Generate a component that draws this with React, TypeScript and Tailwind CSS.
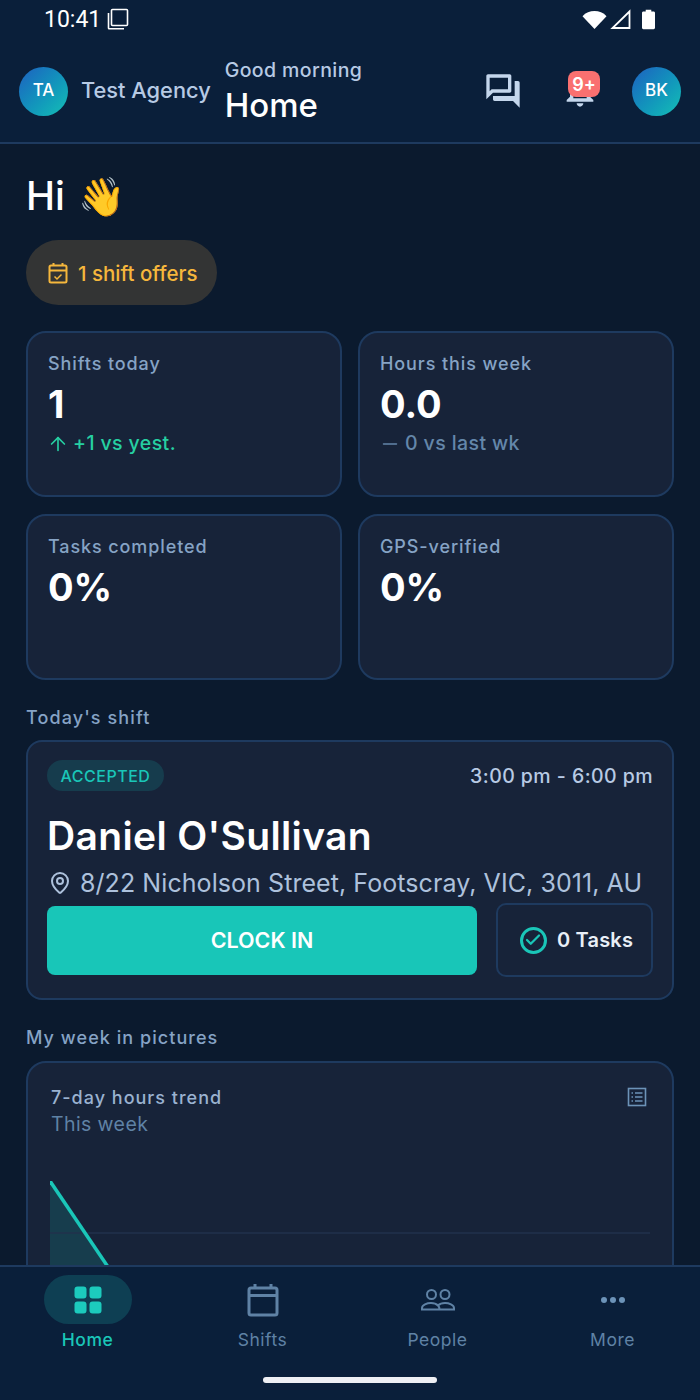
import { ReactNode } from "react";
import { ArrowUp, Check, MapPin, Minus } from "lucide-react";

const StatCard = ({ label, value, delta }: { label: string; value: string; delta?: ReactNode }) => (
    <div className="h-[166px] rounded-[20px] border-2 border-[#1e3a5f] bg-[#172339] px-[20px] pt-[19px]">
        <p className="text-[18px] leading-[24px] font-medium tracking-[0.9px] text-[#86a3c5]">{label}</p>
        <p className="mt-[3px] text-[38px] leading-[50px] font-bold text-white">{value}</p>
        {delta}
    </div>
);

const NavItem = ({ label, active, children }: { label: string; active?: boolean; children: ReactNode }) => (
    <div className="flex flex-col items-center">
        <div className={`flex h-[49px] w-[88px] items-center justify-center rounded-full ${active ? "bg-[#0e3f53]" : ""}`}>
            {children}
        </div>
        <span className={`mt-[4px] text-[17.500px] leading-[24px] tracking-[0.5px] ${active ? "font-medium text-[#1ac6b8]" : "text-[#5f82a5]"}`}>
            {label}
        </span>
    </div>
);

export default function App() {
    return (
        <div className="flex h-[1400px] w-[700px] flex-col overflow-hidden bg-[#0b1a2e] font-['Inter',sans-serif]">
            {/* header + status bar */}
            <header className="h-[144px] shrink-0 border-b-2 border-[#1e3a5f] bg-[#0a1f3a]">
                <div className="flex h-[38px] items-center justify-between pr-[45px] pl-[44px]">
                    <div className="flex items-center gap-[6px]">
                        <span className="mt-[2px] font-['Roboto',sans-serif] text-[23px] text-white">10:41</span>
                        <svg width="22" height="22" viewBox="0 0 22 22" fill="none" stroke="white" strokeWidth="1.600">
                            <rect x="4.500" y="1.500" width="16" height="16" rx="1" />
                            <path d="M1.500 5v15a.8.8 0 0 0 .8.8h14.700" />
                        </svg>
                    </div>
                    <div className="flex items-center">
                        <svg width="25" height="21" viewBox="0 0 26 20">
                            <path d="M0.500 6.500C7-0.500 19-0.500 25.500 6.500L13 20z" fill="white" />
                        </svg>
                        <svg width="21" height="20" viewBox="0 0 21 20" fill="none" stroke="white" strokeWidth="1.800" className="ml-[3px]">
                            <path d="M19.500 2.500V19H2.500z" />
                        </svg>
                        <svg width="13" height="21" viewBox="0 0 14 21" className="ml-[11px]">
                            <path d="M4 0h6v2h2.500c.8 0 1.500.7 1.500 1.500V19.500c0 .8-.7 1.500-1.500 1.500H1.500C.7 21 0 20.300 0 19.500V3.500C0 2.700.7 2 1.500 2H4z" fill="white" />
                        </svg>
                    </div>
                </div>
                <div className="flex h-[104px] items-center pt-[2px] pr-[19px] pl-[19px]">
                    <div className="flex h-[49px] w-[49px] items-center justify-center rounded-full bg-gradient-to-br from-[#1f5fbf] to-[#18c0b4] text-[17px] font-medium text-white">
                        TA
                    </div>
                    <span className="mt-[-2px] ml-[13px] text-[21.800px] font-medium text-[#b7cae4]">Test Agency</span>
                    <div className="ml-[14px] flex flex-col">
                        <span className="text-[19.500px] leading-[26px] font-medium tracking-[0.4px] text-[#b7cae4]">Good morning</span>
                        <span className="mt-[2px] text-[33px] leading-[40px] font-medium text-white">Home</span>
                    </div>
                    <svg width="40" height="40" viewBox="0 0 24 24" fill="#c4d6ec" className="ml-auto">
                        <path d="M15 4v7H5.170L4 12.170V4h11m1-2H3c-.55 0-1 .45-1 1v14l4-4h10c.55 0 1-.45 1-1V3c0-.55-.45-1-1-1zm5 4h-2v9H6v2c0 .55.45 1 1 1h11l4 4V7c0-.55-.45-1-1-1z" />
                    </svg>
                    <div className="relative mt-[-2px] mr-[32px] ml-[37px] h-[40px] w-[40px]">
                        <svg width="40" height="40" viewBox="0 0 24 24" fill="#c4d6ec">
                            <path d="M12 22c1.100 0 2-.9 2-2h-4c0 1.100.9 2 2 2zm6-6v-5c0-3.070-1.630-5.640-4.500-6.320V4c0-.83-.67-1.500-1.500-1.500s-1.500.67-1.500 1.500v.68C7.640 5.360 6 7.920 6 11v5l-2 2v1h16v-1l-2-2zm-2 1H8v-6c0-2.480 1.510-4.500 4-4.500s4 2.020 4 4.500v6z" />
                        </svg>
                        <span className="absolute top-[1px] left-[8px] flex h-[26px] w-[32px] items-center justify-center rounded-[8px] bg-[#f97070] text-[18px] font-semibold text-white">
                            9+
                        </span>
                    </div>
                    <div className="flex h-[49px] w-[49px] items-center justify-center rounded-full bg-gradient-to-br from-[#1f5fbf] to-[#18c0b4] text-[17px] font-medium text-white">
                        BK
                    </div>
                </div>
            </header>

            <main className="min-h-0 flex-1 overflow-hidden px-[26px]">
                <div className="mt-[27px] flex h-[50px] items-center">
                    <span className="text-[39px] leading-[50px] font-medium text-white">Hi</span>
                    <span className="ml-[13px] text-[38px] leading-[50px]">👋</span>
                </div>

                <div className="mt-[19px] flex h-[65px] w-[191px] items-center rounded-full bg-[#333434] pl-[22px]">
                    <svg width="20" height="22" viewBox="0 0 20 22" fill="none" stroke="#f6b73c" strokeWidth="2">
                        <rect x="1.500" y="3.500" width="17" height="17" rx="1.500" />
                        <path d="M1.500 8.500h17M5.500 1v3M14.500 1v3" />
                        <path d="M6.500 14.500l2.500 2.500 4.500-4.500" strokeWidth="1.500" />
                    </svg>
                    <span className="mt-[3px] ml-[10px] text-[20.500px] font-medium whitespace-nowrap text-[#f6b73c]">1 shift offers</span>
                </div>

                <div className="mt-[26px] grid grid-cols-2 gap-x-[16px] gap-y-[17px]">
                    <StatCard
                        label="Shifts today"
                        value="1"
                        delta={
                            <div className="mt-[1px] flex h-[28px] items-center text-[#26cfa2]">
                                <ArrowUp size={22} strokeWidth={1.800} className="-ml-[1px]" />
                                <span className="ml-[4px] text-[19.500px] font-medium tracking-[0.4px]">+1 vs yest.</span>
                            </div>
                        }
                    />
                    <StatCard
                        label="Hours this week"
                        value="0.0"
                        delta={
                            <div className="mt-[1px] flex h-[28px] items-center text-[#6487aa]">
                                <Minus size={22} strokeWidth={1.800} className="-ml-[1px]" />
                                <span className="ml-[4px] text-[19.500px] font-medium tracking-[0.4px]">0 vs last wk</span>
                            </div>
                        }
                    />
                    <StatCard label="Tasks completed" value="0%" />
                    <StatCard label="GPS-verified" value="0%" />
                </div>

                <p className="mt-[26px] text-[18px] leading-[24px] font-medium tracking-[1.100px] text-[#86a3c5]">Today's shift</p>
                <section className="mt-[10px] h-[260px] rounded-[16px] border-2 border-[#1e3a5f] bg-[#172339] px-[19px] pt-[18px]">
                    <div className="flex items-center justify-between">
                        <span className="flex h-[31px] w-[117px] items-center justify-center rounded-full bg-[#163c4d] text-[16px] font-medium tracking-[0.5px] text-[#1ac6b8]">
                            ACCEPTED
                        </span>
                        <span className="mt-[2px] text-[19.500px] font-medium tracking-[0.45px] text-[#b7cae4]">3:00 pm - 6:00 pm</span>
                    </div>
                    <p className="mt-[20px] text-[39px] leading-[50px] font-semibold tracking-[0.35px] text-white">Daniel O'Sullivan</p>
                    <div className="mt-[2px] flex h-[40px] items-center text-[#adc1dc]">
                        <MapPin size={24} strokeWidth={2} className="ml-[1px] shrink-0" />
                        <span className="mt-[1px] ml-[8px] text-[25px] tracking-[0.07px] whitespace-nowrap">8/22 Nicholson Street, Footscray, VIC, 3011, AU</span>
                    </div>
                    <div className="flex items-start">
                        <button className="mt-[3px] h-[69px] w-[430px] rounded-[8px] bg-[#18c6b8] pb-[2px] text-[21.500px] font-semibold text-white">CLOCK IN</button>
                        <div className="ml-[19px] flex h-[74px] w-[157px] items-center justify-center rounded-[10px] border-2 border-[#1e3a5f] pl-[4px]">
                            <span className="flex h-[27px] w-[27px] items-center justify-center rounded-full border-[3px] border-[#1ac6b8] text-[#1ac6b8]">
                                <Check size={18} strokeWidth={3} />
                            </span>
                            <span className="ml-[10px] text-[20px] font-semibold tracking-[0.2px] text-[#e9eff7]">0 Tasks</span>
                        </div>
                    </div>
                </section>

                <p className="mt-[26px] text-[18px] leading-[24px] font-medium tracking-[1.050px] text-[#86a3c5]">My week in pictures</p>
                <section className="mt-[11px] h-[300px] rounded-[20px] border-2 border-[#1e3a5f] bg-[#172339] px-[23px] pt-[23px]">
                    <div className="flex items-start justify-between">
                        <div>
                            <p className="text-[18px] leading-[24px] font-medium tracking-[1px] text-[#9ab2d0]">7-day hours trend</p>
                            <p className="mt-[2px] text-[19.500px] leading-[24px] tracking-[0.4px] text-[#5f82a5]">This week</p>
                        </div>
                        <svg width="20" height="20" viewBox="0 0 20 20" fill="none" className="mt-[1px] mr-[2px]" stroke="#6c93b8" strokeWidth="1.600">
                            <rect x="1.500" y="1.500" width="17" height="17" />
                            <path d="M4.500 6h1.500M8 6h7.500M4.500 10h1.500M8 10h7.500M4.500 14h1.500M8 14h7.500" />
                        </svg>
                    </div>
                    <svg width="600" height="120" viewBox="0 0 600 120" className="mt-[45px] -ml-[1px]" fill="none">
                        <path d="M0 0L81 120H0z" fill="#1ac6b8" fillOpacity="0.16" />
                        <path d="M0 52H600" stroke="#22324d" strokeWidth="1.500" />
                        <path d="M0 0L81 120" stroke="#1ac6b8" strokeWidth="3.500" />
                    </svg>
                </section>
            </main>

            <nav className="relative h-[135px] shrink-0 border-t-2 border-[#1e3a5f] bg-[#0a1f3a] pt-[8px]">
                <div className="grid grid-cols-4 justify-items-center">
                    <NavItem label="Home" active>
                        <svg width="28" height="28" viewBox="0 0 28 28" fill="#1ccbbd">
                            <rect x="0.500" y="0.500" width="12" height="12" rx="3" />
                            <rect x="15.500" y="0.500" width="12" height="12" rx="3" />
                            <rect x="0.500" y="15.500" width="12" height="12" rx="3" />
                            <rect x="15.500" y="15.500" width="12" height="12" rx="3" />
                        </svg>
                    </NavItem>
                    <NavItem label="Shifts">
                        <svg width="32" height="34" viewBox="0 0 32 34" fill="none" stroke="#5f82a5" strokeWidth="3">
                            <rect x="2" y="5" width="28" height="27" rx="2" />
                            <path d="M2 12.500h28M8 1v4M24 1v4" />
                        </svg>
                    </NavItem>
                    <NavItem label="People">
                        <svg width="34" height="22" viewBox="0 0 34 22" fill="none" stroke="#5f82a5" strokeWidth="2">
                            <circle cx="10.500" cy="5.500" r="4.500" />
                            <circle cx="24" cy="5.500" r="4.500" />
                            <path d="M1 20.500V19c0-3 5-5 9-5 3 0 5.500 1 7 2.500 1.500-1.500 4-2.500 7-2.500 4 0 9 2 9 5v1.500zM17 16.500c1 1 1.500 2 1.500 4" />
                        </svg>
                    </NavItem>
                    <NavItem label="More">
                        <svg width="26" height="8" viewBox="0 0 26 8" fill="#6c93b8">
                            <circle cx="4" cy="4" r="3" />
                            <circle cx="13" cy="4" r="3" />
                            <circle cx="22" cy="4" r="3" />
                        </svg>
                    </NavItem>
                </div>
                <div className="absolute bottom-[17px] left-[263px] h-[6px] w-[174px] rounded-full bg-[#eef0f4]" />
            </nav>
        </div>
    );
}
